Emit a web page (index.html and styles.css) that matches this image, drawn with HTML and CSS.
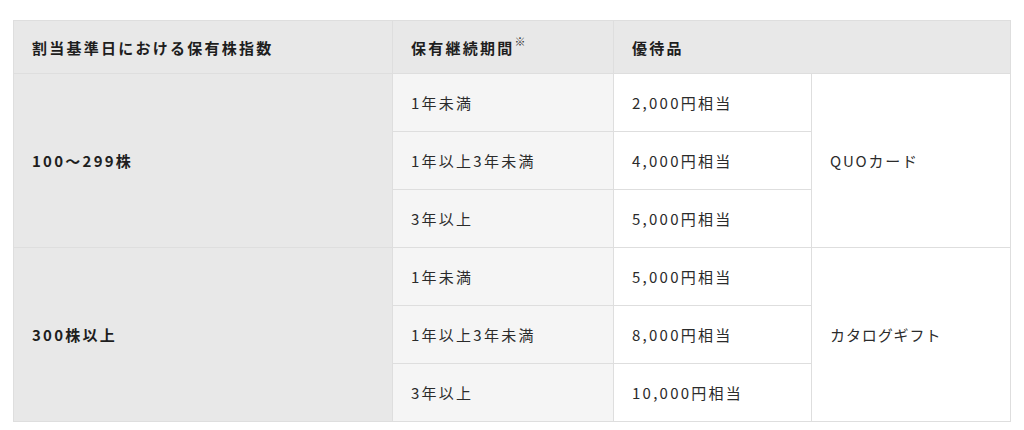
FILE: index.html
```html
<!DOCTYPE html>
<html lang="ja">
<head>
<meta charset="utf-8">
<link rel="stylesheet" href="styles.css">
</head>
<body>
<table class="benefits">
  <colgroup>
    <col class="c1"><col class="c2"><col class="c3"><col class="c4">
  </colgroup>
  <thead>
    <tr class="head">
      <th>割当基準日における保有株指数</th>
      <th>保有継続期間<sup class="note">※</sup></th>
      <th colspan="2">優待品</th>
    </tr>
  </thead>
  <tbody>
    <tr>
      <th class="shares" rowspan="3">100～299株</th>
      <td class="period">1年未満</td>
      <td class="amount">2,000円相当</td>
      <td class="gift" rowspan="3">QUOカード</td>
    </tr>
    <tr>
      <td class="period">1年以上3年未満</td>
      <td class="amount">4,000円相当</td>
    </tr>
    <tr>
      <td class="period">3年以上</td>
      <td class="amount">5,000円相当</td>
    </tr>
    <tr>
      <th class="shares" rowspan="3">300株以上</th>
      <td class="period">1年未満</td>
      <td class="amount">5,000円相当</td>
      <td class="gift catalog" rowspan="3">カタログギフト</td>
    </tr>
    <tr>
      <td class="period">1年以上3年未満</td>
      <td class="amount">8,000円相当</td>
    </tr>
    <tr>
      <td class="period">3年以上</td>
      <td class="amount">10,000円相当</td>
    </tr>
  </tbody>
</table>
</body>
</html>
```

FILE: styles.css
```css
html, body {
  margin: 0;
  padding: 0;
  background: #fff;
}
body {
  padding: 20px 14px 0 13px;
  font-family: "Noto Sans CJK JP", "Noto Sans", sans-serif;
  font-size: 15px;
  letter-spacing: 0.15em;
  color: #2b2b2b;
}
.benefits {
  width: 997px;
  border-collapse: collapse;
  table-layout: fixed;
}
.c1 { width: 379px; }
.c2 { width: 221px; }
.c3 { width: 198px; }
.c4 { width: 199px; }
.benefits th,
.benefits td {
  border: 1px solid #dedede;
  padding: 0 0 0 18px;
  text-align: left;
  vertical-align: middle;
  line-height: 1.4;
}
.head th {
  height: 52px;
  background: #e8e8e8;
  font-weight: bold;
  color: #1e1e1e;
}
.note {
  font-size: 11px;
  font-weight: bold;
  letter-spacing: 0;
  vertical-align: top;
  position: relative;
  top: -3px;
  color: #333;
}
.shares {
  background: #e8e8e8;
  font-weight: bold;
  color: #1e1e1e;
}
.period {
  height: 57px;
  background: #f5f5f5;
}
.amount {
  background: #fff;
}
.gift {
  background: #fff;
  letter-spacing: 0.12em;
}
.catalog {
  letter-spacing: 0.06em;
}
```
